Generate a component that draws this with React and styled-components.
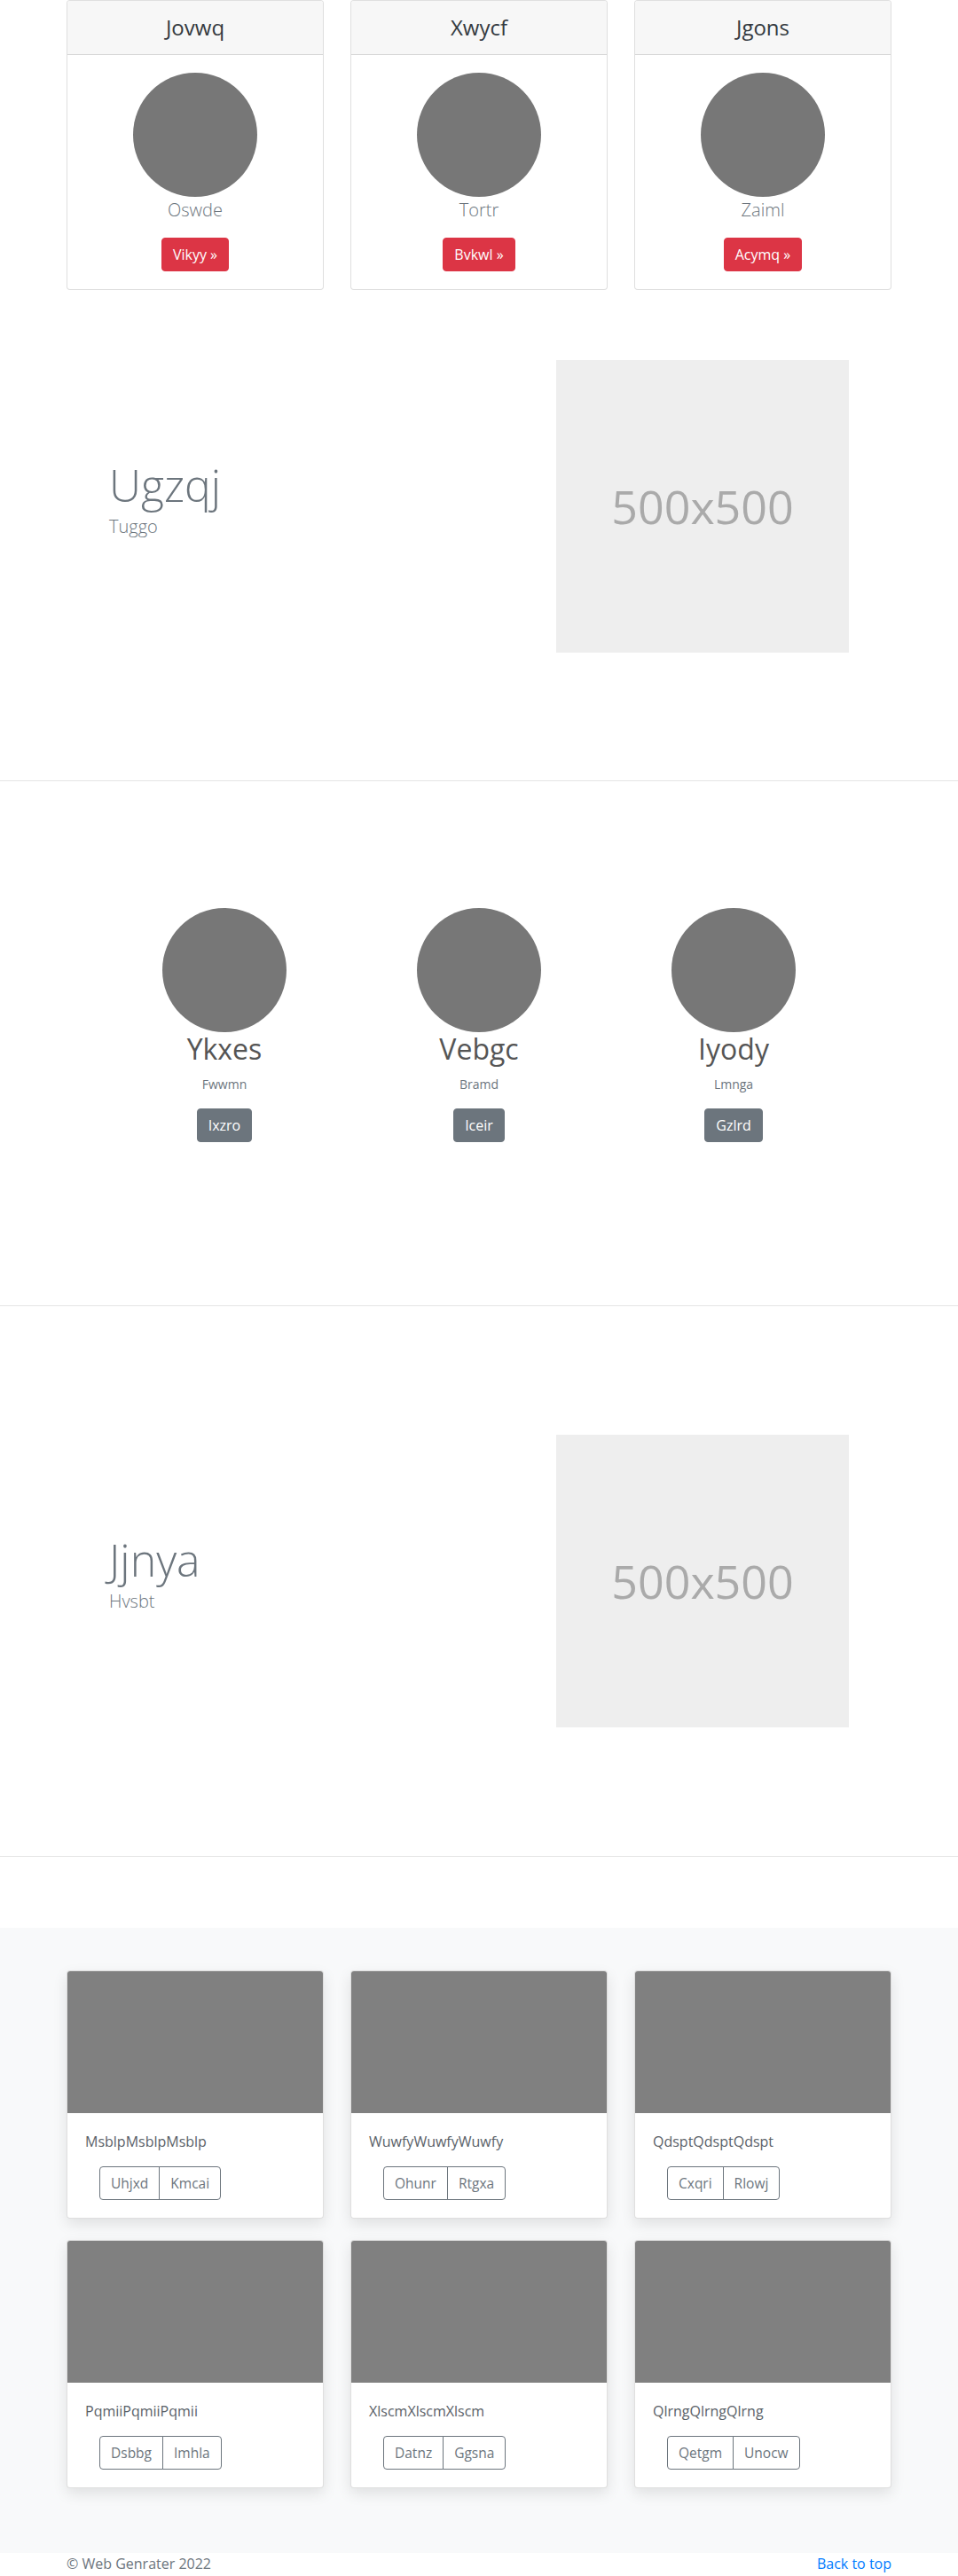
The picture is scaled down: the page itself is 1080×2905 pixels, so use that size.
import React from 'react';
import styled, { createGlobalStyle } from 'styled-components';

const GlobalStyle = createGlobalStyle`
  * {
    box-sizing: border-box;
  }
  body {
    margin: 0;
    font-family: 'Open Sans', 'Liberation Sans', sans-serif;
    font-size: 16px;
    line-height: 1.5;
    color: #212529;
    background: #fff;
  }
`;

const Container = styled.div`
  width: 930px;
  margin: 0 auto;
`;

/* pricing cards */
const CardDeck = styled.div`
  display: grid;
  grid-template-columns: repeat(3, 290px);
  gap: 30px;
`;

const PriceCard = styled.div`
  border: 1px solid rgba(0, 0, 0, 0.125);
  border-radius: 4px;
  background: #fff;
  text-align: center;
  overflow: hidden;
`;

const CardHeader = styled.div`
  background: #f7f7f7;
  border-bottom: 1px solid rgba(0, 0, 0, 0.125);
  padding: 12px 20px;
`;

const CardTitle = styled.h4`
  margin: 0;
  font-size: 24px;
  font-weight: 500;
  line-height: 36px;
  color: #343a40;
`;

const CardBody = styled.div`
  padding: 20px;
  display: flex;
  flex-direction: column;
  align-items: center;
`;

const Avatar = styled.div`
  width: 140px;
  height: 140px;
  border-radius: 50%;
  background: #777;
`;

const Lead = styled.p`
  margin: 0 0 16px;
  font-size: 20px;
  font-weight: 300;
  line-height: 30px;
  color: #6c757d;
`;

const Button = styled.a`
  display: inline-block;
  padding: 6px 12px;
  font-size: 16px;
  line-height: 24px;
  border-radius: 4px;
  color: #fff;
  background: ${(p) => p.$bg};
  border: 1px solid ${(p) => p.$bg};
  text-decoration: none;
  cursor: pointer;
`;

/* hero rows */
const Hero = styled.section`
  padding: ${(p) => p.$top}px 0 ${(p) => p.$bottom}px;
  border-bottom: 1px solid #e5e5e5;
`;

const HeroRow = styled.div`
  display: grid;
  grid-template-columns: 1fr 330px;
  align-items: center;
  padding: 0 48px;
`;

const HeroTitle = styled.h1`
  margin: 0 0 2px;
  font-size: 50px;
  font-weight: 300;
  line-height: 60px;
  color: #6c757d;
`;

const HeroSub = styled.p`
  margin: 0 0 16px;
  font-size: 20px;
  font-weight: 300;
  line-height: 30px;
  color: #6c757d;
`;

const Placeholder = styled.div`
  width: 330px;
  height: 330px;
  background: #eee;
  color: #aaa;
  font-size: 52px;
  display: flex;
  align-items: center;
  justify-content: center;
`;

/* team */
const Team = styled.section`
  padding: 143px 0 184px;
  border-bottom: 1px solid #e5e5e5;
`;

const TeamRow = styled.div`
  display: grid;
  grid-template-columns: repeat(3, 287px);
  justify-content: center;
`;

const Member = styled.div`
  display: flex;
  flex-direction: column;
  align-items: center;
  text-align: center;
`;

const MemberName = styled.h2`
  margin: 0 0 10px;
  font-size: 32px;
  font-weight: 400;
  line-height: 38px;
  color: #555;
`;

const MemberRole = styled.p`
  margin: 0 0 17px;
  font-size: 14px;
  line-height: 21px;
  color: #6c757d;
`;

/* album */
const Album = styled.section`
  margin-top: 80px;
  background: #f8f9fa;
  padding: 48px 0 49px;
`;

const AlbumGrid = styled.div`
  display: grid;
  grid-template-columns: repeat(3, 290px);
  column-gap: 30px;
`;

const AlbumCard = styled.div`
  background: #fff;
  border: 1px solid rgba(0, 0, 0, 0.125);
  border-radius: 4px;
  overflow: hidden;
  margin-bottom: 24px;
  box-shadow: 0 6px 16px rgba(0, 0, 0, 0.1);
`;

const Thumb = styled.div`
  height: 160px;
  background: #808080;
`;

const AlbumBody = styled.div`
  padding: 20px;
`;

const AlbumText = styled.p`
  margin: 0 0 16px;
  color: #5a6168;
`;

const BtnGroup = styled.div`
  display: inline-flex;
  margin-left: 16px;
`;

const OutlineBtn = styled.button`
  font-family: inherit;
  font-size: 15.5px;
  line-height: 24px;
  padding: 6px 12px;
  background: transparent;
  color: #6c757d;
  border: 1px solid #6c757d;
  border-radius: 0;
  &:first-child {
    border-radius: 4px 0 0 4px;
  }
  &:last-child {
    border-radius: 0 4px 4px 0;
    margin-left: -1px;
  }
`;

/* footer */
const Footer = styled.footer`
  padding-bottom: 48px;
`;

const FooterRow = styled.div`
  display: flex;
  justify-content: space-between;
  color: #6c757d;
`;

const TopLink = styled.a`
  color: #007bff;
  text-decoration: none;
`;

const pricing = [
  { title: 'Jovwq', name: 'Oswde', btn: 'Vikyy' },
  { title: 'Xwycf', name: 'Tortr', btn: 'Bvkwl' },
  { title: 'Jgons', name: 'Zaiml', btn: 'Acymq' },
];

const team = [
  { name: 'Ykxes', role: 'Fwwmn', btn: 'Ixzro' },
  { name: 'Vebgc', role: 'Bramd', btn: 'Iceir' },
  { name: 'Iyody', role: 'Lmnga', btn: 'Gzlrd' },
];

const album = [
  { text: 'MsblpMsblpMsblp', a: 'Uhjxd', b: 'Kmcai' },
  { text: 'WuwfyWuwfyWuwfy', a: 'Ohunr', b: 'Rtgxa' },
  { text: 'QdsptQdsptQdspt', a: 'Cxqri', b: 'Rlowj' },
  { text: 'PqmiiPqmiiPqmii', a: 'Dsbbg', b: 'Imhla' },
  { text: 'XlscmXlscmXlscm', a: 'Datnz', b: 'Ggsna' },
  { text: 'QlrngQlrngQlrng', a: 'Qetgm', b: 'Unocw' },
];

const App = () => {
  return (
    <>
      <GlobalStyle />
      <Container>
        <CardDeck>
          {pricing.map((c) => (
            <PriceCard key={c.title}>
              <CardHeader>
                <CardTitle>{c.title}</CardTitle>
              </CardHeader>
              <CardBody>
                <Avatar />
                <Lead>{c.name}</Lead>
                <Button $bg='#dc3545'>{c.btn} »</Button>
              </CardBody>
            </PriceCard>
          ))}
        </CardDeck>
      </Container>

      <Hero $top={79} $bottom={144}>
        <Container>
          <HeroRow>
            <div>
              <HeroTitle>Ugzqj</HeroTitle>
              <HeroSub>Tuggo</HeroSub>
            </div>
            <Placeholder>500x500</Placeholder>
          </HeroRow>
        </Container>
      </Hero>

      <Team>
        <TeamRow>
          {team.map((m) => (
            <Member key={m.name}>
              <Avatar />
              <MemberName>{m.name}</MemberName>
              <MemberRole>{m.role}</MemberRole>
              <Button $bg='#6c757d'>{m.btn}</Button>
            </Member>
          ))}
        </TeamRow>
      </Team>

      <Hero $top={145} $bottom={145}>
        <Container>
          <HeroRow>
            <div>
              <HeroTitle>Jjnya</HeroTitle>
              <HeroSub>Hvsbt</HeroSub>
            </div>
            <Placeholder>500x500</Placeholder>
          </HeroRow>
        </Container>
      </Hero>

      <Album>
        <Container>
          <AlbumGrid>
            {album.map((a) => (
              <AlbumCard key={a.text}>
                <Thumb />
                <AlbumBody>
                  <AlbumText>{a.text}</AlbumText>
                  <BtnGroup>
                    <OutlineBtn>{a.a}</OutlineBtn>
                    <OutlineBtn>{a.b}</OutlineBtn>
                  </BtnGroup>
                </AlbumBody>
              </AlbumCard>
            ))}
          </AlbumGrid>
        </Container>
      </Album>

      <Footer>
        <Container>
          <FooterRow>
            <span>© Web Genrater 2022</span>
            <TopLink href='#'>Back to top</TopLink>
          </FooterRow>
        </Container>
      </Footer>
    </>
  );
};

export default App;
